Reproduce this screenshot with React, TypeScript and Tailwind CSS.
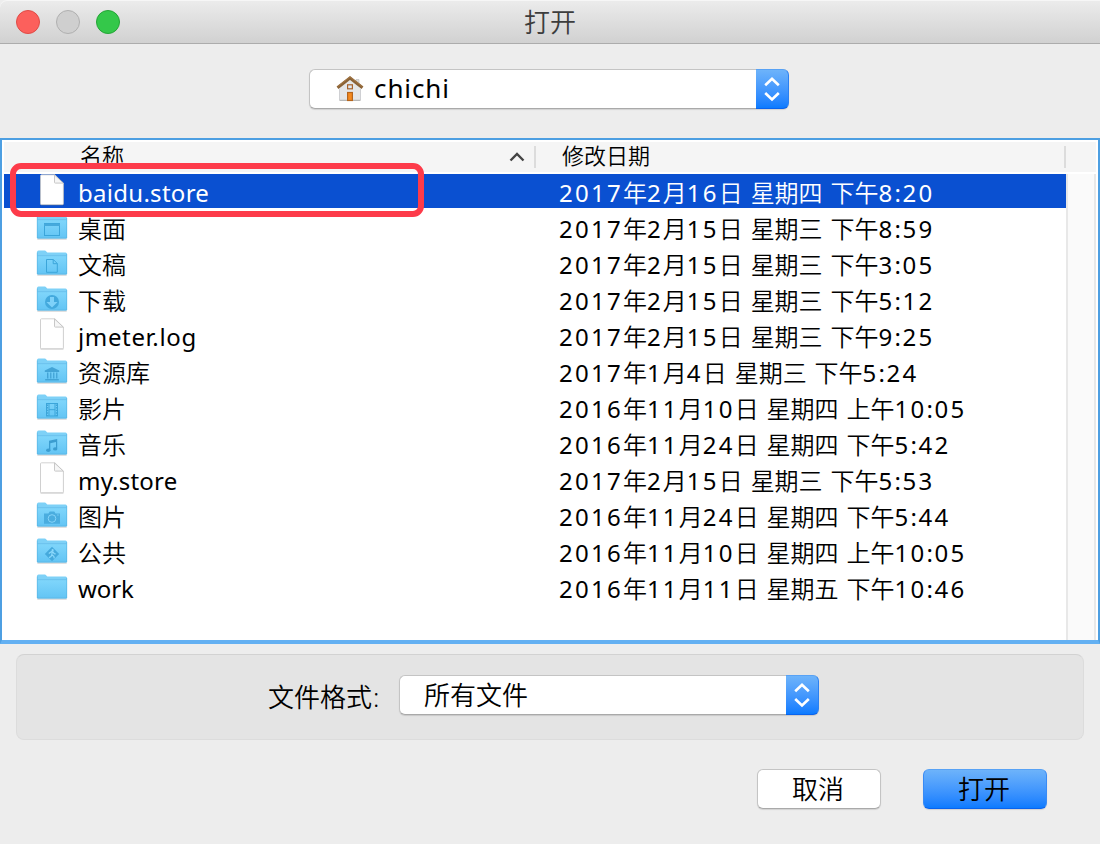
import React from "react";

type Kind = "file" | "desktop" | "documents" | "downloads" | "library" | "movies" | "music" | "pictures" | "public" | "folder";

const rows: { name: string; date: string; kind: Kind; selected?: boolean; tracking?: string }[] = [
  { name: "baidu.store", date: "2017年2月16日 星期四 下午8:20", kind: "file", selected: true, tracking: "tracking-[0.28px]" },
  { name: "桌面", date: "2017年2月15日 星期三 下午8:59", kind: "desktop" },
  { name: "文稿", date: "2017年2月15日 星期三 下午3:05", kind: "documents" },
  { name: "下载", date: "2017年2月15日 星期三 下午5:12", kind: "downloads" },
  { name: "jmeter.log", date: "2017年2月15日 星期三 下午9:25", kind: "file", tracking: "tracking-[0.65px]" },
  { name: "资源库", date: "2017年1月4日 星期三 下午5:24", kind: "library" },
  { name: "影片", date: "2016年11月10日 星期四 上午10:05", kind: "movies" },
  { name: "音乐", date: "2016年11月24日 星期四 下午5:42", kind: "music" },
  { name: "my.store", date: "2017年2月15日 星期三 下午5:53", kind: "file", tracking: "tracking-[0.2px]" },
  { name: "图片", date: "2016年11月24日 星期四 下午5:44", kind: "pictures" },
  { name: "公共", date: "2016年11月10日 星期四 上午10:05", kind: "public" },
  { name: "work", date: "2016年11月11日 星期五 下午10:46", kind: "folder", tracking: "tracking-[-0.1px]" },
];

/* Digits sit on a 16px grid, separators on an 8px one. */
function DateText({ value }: { value: string }) {
  return (
    <span className="whitespace-pre">
      {value.split(/(\d+|[ :]+)/).map((part, i) => {
        if (/^\d/.test(part)) return <span key={i} className="tracking-[2.24px]">{part}</span>;
        if (/^[ :]/.test(part)) return <span key={i} className="tracking-[1.6px]">{part}</span>;
        return <span key={i} className="font-[350]">{part}</span>;
      })}
    </span>
  );
}

function Glyph({ kind }: { kind: Kind }) {
  const s = { fill: "none", stroke: "#3ba5da", strokeWidth: 1 };
  switch (kind) {
    case "desktop":
      return <g><rect x="8.5" y="13.5" width="15" height="12" {...s} /><path d="M8 13.500h16v2.500H8z" fill="#46a9dc" /></g>;
    case "documents":
      return <path d="M10.5 13.5h6.8l4 4v8.8H10.5zM17.2 13.5v4.2h4" {...s} />;
    case "downloads":
      return <g><circle cx="16" cy="20" r="7" fill="#43a9dd" /><path d="M14 15h4v5h3.6L16 25.6 10.4 20H14z" fill="#7ed1f9" /></g>;
    case "library":
      return <path d="M16 13l7.2 3.4v1.5H8.8v-1.5zM11 18.500h1.400v6H11zM14.100 18.500h1.300v6h-1.300zM17.100 18.500h1.300v6h-1.300zM20.100 18.500h1.300v6h-1.300zM9.200 25h13.600v1.600H9.200z" fill="#43a4d6" />;
    case "movies":
      return <g><rect x="10.5" y="13.5" width="11" height="12.500" {...s} /><path d="M13 13.500V26M19 13.500V26M13 19.700h6" {...s} /><path d="M11.500 14.500V26M20.500 14.500V26" stroke="#43a4d6" strokeWidth="1.200" strokeDasharray="1.400 1.200" /></g>;
    case "music":
      return <g fill="#3b9dd0"><path d="M13 14.800l8.200-1.800v9.600h-1.200v-6.600l-5.700 1.200v6.800H13z" /><ellipse cx="12.300" cy="24.300" rx="2.200" ry="1.700" /><ellipse cx="19.200" cy="22.900" rx="2.200" ry="1.700" /></g>;
    case "pictures":
      return <g><path d="M8 15.500h4.500l1.200-2h4.600l1.200 2H24v10.300H8z" fill="#4aaddf" /><circle cx="16" cy="20.500" r="3.800" fill="none" stroke="#86d4f9" strokeWidth="1" /><path d="M21.300 17h1.300" stroke="#86d4f9" /></g>;
    case "public":
      return <g><path d="M16 12.800l7.200 7.200-7.200 7.200L8.800 20z" fill="#45a9dc" /><circle cx="16.600" cy="16.200" r="1.100" fill="#8bd8fb" /><path d="M12.800 19.500l2.600-1.800 1.500.2 1.300 1.800 1.500.2M16.200 18l-.4 2.800 2 1.600.5 2M15.800 20.800l-.8 1.800-2 1" fill="none" stroke="#8bd8fb" strokeWidth="1.200" /></g>;
    default:
      return null;
  }
}

function EntryIcon({ kind }: { kind: Kind }) {
  if (kind === "file") {
    return (
      <svg className="block h-9 w-8 shrink-0" viewBox="0 0 32 36">
        <path d="M4.500 2h15l8 8v21.800h-23z" fill="#000" opacity=".15" />
        <path d="M5.600.8h13.300l8.500 8.400v20.600q0 .9-.9.9H5.400q-.9 0-.9-.9V1.700q0-.9 1.100-.9z" fill="#fff" stroke="#c6c6c6" strokeWidth=".8" />
        <path d="M18.500.9v7.400q0 .8.800.8h8z" fill="#f6f6f6" stroke="#c2c2c2" strokeWidth=".9" />
      </svg>
    );
  }
  return (
    <svg className="block h-9 w-8 shrink-0" viewBox="0 0 32 36">
      <defs>
        <linearGradient id="folderFront" x1="0" y1="0" x2="0" y2="1">
          <stop offset="0" stopColor="#80d6fb" />
          <stop offset="1" stopColor="#62c4f4" />
        </linearGradient>
      </defs>
      <path d="M1.300 28.500h29.400v1H1.300z" fill="#000" opacity=".25" />
      <path d="M1 6q0-1.500 1.500-1.500h6.300q.8 0 1.500.9l1 1.100h18.200q1.500 0 1.500 1.500v20H1z" fill="#7ed1f7" />
      <path d="M1 9.800h30v17.500q0 1.200-1.200 1.200H2.200Q1 28.500 1 27.300z" fill="url(#folderFront)" />
      <path d="M1.500 9.700h29" stroke="#65bde8" strokeWidth=".8" />
      <path d="M1.300 6.500v21.500h29.400V8" fill="none" stroke="#59b6e4" strokeWidth=".7" />
      <Glyph kind={kind} />
    </svg>
  );
}

function HomeIcon() {
  return (
    <svg className="block h-7 w-7" viewBox="0 0 28 28">
      <path d="M20 4.500h3v5h-3z" fill="#ddd" stroke="#bbb" strokeWidth=".6" />
      <path d="M3.500 13L14 4.500 24.500 13v12.500h-21z" fill="#e4e6e8" />
      <path d="M3.500 25.300h21" stroke="#a8a8a8" />
      <path d="M3.500 14v11M24.500 14v11" stroke="#c0c2c4" strokeWidth=".7" />
      <path d="M1.500 12.800L14 3l12.500 9.800" fill="none" stroke="#8a6236" strokeWidth="3" />
      <path d="M1.800 11.500L14 1.900 26.200 11.500" fill="none" stroke="#ac7e48" strokeWidth=".8" />
      <rect x="11.600" y="9.800" width="4.800" height="4" fill="#dce9f4" stroke="#a8622a" strokeWidth="1.200" />
      <rect x="11.600" y="17.500" width="4.800" height="8" fill="#f58a1f" stroke="#b5651c" strokeWidth="1.200" />
    </svg>
  );
}

function Stepper() {
  return (
    <span className="flex h-full w-[33px] items-center justify-center rounded-r-[6px] border border-l-0 border-t-[#58a2f5] border-r-[#2c80f0] border-b-[#0a63ee] bg-linear-to-b from-[#6db3fa] to-[#0a7bff]">
      <svg className="h-[26px] w-4" viewBox="0 0 16 26" fill="none" stroke="#fff" strokeWidth="2.600">
        <path d="M1.200 9.200L8 2.700l6.800 6.500M1.200 17L8 23.500l6.800-6.500" />
      </svg>
    </span>
  );
}

const control = "rounded-[6px] border border-[#c4c4c4] border-b-[#a9a9a9] bg-white shadow-[0_1px_1px_rgba(0,0,0,0.12)]";

export default function App() {
  return (
    <div className="relative flex h-[844px] w-[1100px] flex-col overflow-hidden bg-[#ededed] font-['Noto_Sans','Noto_Sans_CJK_SC',sans-serif] text-black">
      <header className="relative flex h-11 shrink-0 items-center gap-4 rounded-tl-[7px] border-b border-[#acacac] bg-linear-to-b from-[#ececec] to-[#d1d1d1] px-4 shadow-[inset_0_1px_0_#f6f6f6]">
        <span className="h-6 w-6 rounded-full border border-[#e04b46] bg-[#fc605c]" />
        <span className="h-6 w-6 rounded-full border border-[#b0b0b0] bg-[#cfcfcf]" />
        <span className="h-6 w-6 rounded-full border border-[#24a536] bg-[#34c84a]" />
        <h1 className="absolute inset-x-0 top-0 text-center text-[26px] leading-[44px] font-[350] text-[#3d3d3d]">打开</h1>
      </header>

      <div className="flex h-[94px] shrink-0 justify-center pt-[25px]">
        <div className={`relative left-[-1px] flex h-10 w-[480px] ${control} border-r-0`}>
          <div className="flex flex-1 items-center pl-[26px] text-[26px] leading-9">
            <HomeIcon />
            <span className="pb-[2px] pl-[10px] tracking-[0.9px]">chichi</span>
          </div>
          <div className="-my-px h-10"><Stepper /></div>
        </div>
      </div>

      <main className="flex h-[506px] shrink-0 flex-col border-2 border-b-4 border-[#4d9fe2] border-b-[#63b0f2] bg-white">
        <div className="mx-[2px] mt-[2px] flex h-[30px] shrink-0 items-center bg-[#f5f5f5] text-[22px] font-[350]">
          <div className="flex h-full flex-1 items-center">
            <div className="flex w-[530px] items-center justify-between pr-[9px] pl-[76px]">
              <span className="leading-[26px] pb-[4px]">名称</span>
              <svg className="mb-px h-3 w-4" viewBox="0 0 16 12" fill="none" stroke="#444" strokeWidth="2.400"><path d="M1.500 9.500L8 3l6.500 6.500" /></svg>
            </div>
            <span className="h-[22px] w-[2px] bg-[#dcdcdc]" />
            <span className="pb-[4px] pl-[26px] leading-[26px]">修改日期</span>
          </div>
          <span className="mr-[30px] h-[22px] w-[2px] bg-[#dcdcdc]" />
        </div>
        <div className="mx-[2px] mt-[2px] flex min-h-0 flex-1">
          <div className="w-[1062px] text-2xl leading-9">
            {rows.map((row) => (
              <div key={row.name} className="h-9">
                <div className={row.selected ? "flex h-[34px] bg-[#0a50d1] text-white" : "flex h-9"}>
                  <div className="flex w-[555px] pl-8">
                    <EntryIcon kind={row.kind} />
                    <span className={`pt-px pl-[10px] ${row.tracking ?? "font-[350]"}`}>{row.name}</span>
                  </div>
                  <div className="pt-px"><DateText value={row.date} /></div>
                </div>
              </div>
            ))}
          </div>
          <div className="flex-1 border-x-2 border-[#e8e8e8] bg-[#fafafa]" />
        </div>
      </main>

      <section className="mx-4 mt-[10px] flex h-[86px] shrink-0 items-center rounded-[8px] border border-[#dcdcdc] border-t-[#d2d2d2] bg-[#e4e4e4] pl-[251px] text-[26px]">
        <span className="w-[131px] font-[350]">文件格式<span className="pl-px">:</span></span>
        <div className={`flex h-10 w-[420px] ${control} relative top-[-2px] border-r-0`}>
          <span className="flex-1 pl-6 leading-[38px] font-[350]">所有文件</span>
          <div className="-my-px h-10"><Stepper /></div>
        </div>
      </section>

      <footer className="flex justify-end gap-[42px] pt-[29px] pr-[53px] text-[26px] font-[350]">
        <button className={`h-10 w-[124px] pr-[2px] leading-9 ${control}`}>取消</button>
        <button className="h-10 w-[124px] rounded-[6px] border border-t-[#58a2f5] border-r-[#398bf5] border-b-[#0a63ee] border-l-[#398bf5] bg-linear-to-b from-[#6db3fa] to-[#0a7bff] pr-[2px] leading-9 shadow-[0_1px_1px_rgba(0,0,0,0.12)]">打开</button>
      </footer>

      <div className="absolute top-[163px] left-[10px] h-[54px] w-[414px] rounded-[11px] border-[6px] border-[#fd3b4a]" />
    </div>
  );
}
